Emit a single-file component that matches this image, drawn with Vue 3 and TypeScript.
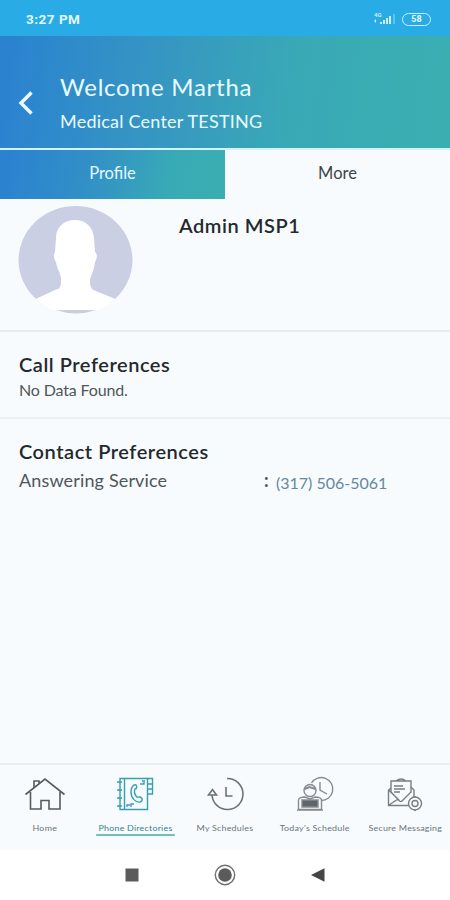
<script setup lang="ts">
interface NavItem {
  id: string
  label: string
  active?: boolean
}

const navItems: NavItem[] = [
  { id: 'home', label: 'Home' },
  { id: 'directory', label: 'Phone Directories', active: true },
  { id: 'schedules', label: 'My Schedules' },
  { id: 'today', label: "Today's Schedule" },
  { id: 'messaging', label: 'Secure Messaging' },
]
</script>

<template>
  <div class="screen">
    <div class="status">
      <span class="time">3:27 PM</span>
      <div class="indicators">
        <svg width="24" height="16" viewBox="0 0 24 16" fill="#c9f0fa">
          <text x="1" y="6" font-size="6" font-weight="700">4G</text>
          <path d="M1 10l2-2v4zM7 13v-2h2v2zM10 13v-4h2v4zM13 13V7h2v6zM16 13V5h2v8z" />
          <path d="M20 13V3h2v10z" opacity=".35" />
        </svg>
        <span class="battery">58</span>
      </div>
    </div>

    <header class="header">
      <svg class="back" width="16" height="26" viewBox="0 0 16 26" fill="none" stroke="#eefcff" stroke-width="3.4">
        <path d="M13.500 2.500L3 13l10.500 10.500" />
      </svg>
      <div class="heading">
        <h1>Welcome Martha</h1>
        <p>Medical Center TESTING</p>
      </div>
    </header>

    <div class="tabs">
      <div class="tab selected"><span>Profile</span></div>
      <div class="tab"><span>More</span></div>
    </div>

    <section class="person">
      <svg class="avatar" width="116" height="110" viewBox="0 0 116 110">
        <path d="M19 94A57 54 0 1 1 98 94L74 84L40 84Z" fill="#cbcfe3" />
        <path d="M58 15C47 15 39 22 39 33L38 47C36 49 37 55 39 57C40 64 44 69 44 74V78C43 86 38 86 33 88C25 91 21 93 19 94L34 105H82L98 94C96 93 88 90 83 88C77 86 73 84 73 78V74C75 69 77 65 78 57C80 54 81 49 78 47L77 33C76 22 69 15 58 15Z" fill="#fff" />
        <path d="M39 105H79Q59 112 39 105Z" fill="#cbcdd9" />
      </svg>
      <h2 class="name">Admin MSP1</h2>
    </section>

    <section class="calls">
      <h2>Call Preferences</h2>
      <p class="empty">No Data Found.</p>
    </section>

    <section class="contacts">
      <h2>Contact Preferences</h2>
      <div class="contact-row">
        <span class="service">Answering Service</span>
        <span class="colon">:</span>
        <span class="phone">(317) 506-5061</span>
      </div>
    </section>

    <nav class="nav">
      <div v-for="item in navItems" :key="item.id" class="nav-item" :class="{ active: item.active }">
        <svg v-if="item.id === 'home'" width="42" height="38" viewBox="0 0 42 38" fill="none" stroke="#555b60" stroke-width="1.600">
          <path d="M1.500 19.500L21 4L40.500 19.500M6.500 17V34H17V25.500H25V34H36V17M10 13V6h5v3.500" />
        </svg>
        <svg v-else-if="item.id === 'directory'" width="42" height="38" viewBox="0 0 42 38" fill="none" stroke="#36a0aa" stroke-width="1.400">
          <path d="M6 3.500H33.500V34.500H6ZM10.500 4V34" />
          <path d="M3 7h5M3 15h5M3 23h5M3 31h5M33.500 3.500h5v15.500h-5M34 9h4M34 14h4" />
          <path d="M22 10c-3-1-5 3-5 7c0 6 5 11 9 10c3-1 3-4 0-5c-2 0-3 1-4-1c-2-3-2-5-1-7c2 0 2-3 1-4Z" />
          <path d="M26 9h4v-2M28 6h3" />
          <path d="M13 32v-2h3M17 32v-3h3" stroke="#4a8fdc" />
        </svg>
        <svg v-else-if="item.id === 'schedules'" width="42" height="38" viewBox="0 0 42 38" fill="none" stroke="#697377" stroke-width="1.600">
          <path d="M23 3.500A15.500 15.500 0 1 1 8 20" />
          <path d="M4.500 20L8.500 14.500L12.500 20Z" />
          <path d="M22 12v9H28.500" />
        </svg>
        <svg v-else-if="item.id === 'today'" width="42" height="38" viewBox="0 0 42 38" fill="none" stroke="#858b90" stroke-width="1.400">
          <path d="M17.500 8A11.500 11.500 0 1 1 27 25.500" />
          <path d="M26 7v8l7 4" />
          <circle cx="16" cy="15.500" r="6" />
          <path d="M10.500 14l5-2l6 2" stroke-width="2" />
          <path d="M4.500 34.500V25Q5 22 11 22L16 24L21 22Q27 22 27.500 25V34.500Z" />
          <path d="M8 25h16v7H8z" fill="#5f666b" />
          <path d="M3 35h26" />
        </svg>
        <svg v-else width="42" height="38" viewBox="0 0 42 38" fill="none" stroke="#777f84" stroke-width="1.400">
          <path d="M7 13L4.500 15V30.500H25M7 17V6H27V17L18 26Q17 27 15.500 26ZM27 12l3 3v7M4.500 15L15 25M5 30l9-6M12 6q5-4 10 0" />
          <path d="M10 11h9M10 14h11M10 17h6" />
          <circle cx="31" cy="28.500" r="6.500" />
          <circle cx="31" cy="28.500" r="3" />
          <path d="M31 22v-1M31 36v-1M24 28.500h1M37 28.500h1" stroke-width="2" />
        </svg>
        <span class="nav-label">{{ item.label }}</span>
      </div>
    </nav>

    <div class="system">
      <svg width="14" height="14" viewBox="0 0 14 14"><path d="M.5.5h13v13H.5z" fill="#5b5b5b" /></svg>
      <svg width="22" height="22" viewBox="0 0 22 22">
        <circle cx="11" cy="11" r="9.700" fill="none" stroke="#707070" stroke-width="1.400" />
        <circle cx="11" cy="11" r="6.800" fill="#5b5b5b" />
      </svg>
      <svg width="14" height="14" viewBox="0 0 14 14"><path d="M0 7L13.500.3v13.400z" fill="#454545" /></svg>
    </div>
  </div>
</template>

<style>
body {
  margin: 0;
}
</style>

<style scoped>
.screen {
  width: 450px;
  height: 900px;
  display: flex;
  flex-direction: column;
  overflow: hidden;
  background: #f7fbfe;
  color: #25292c;
  font-family: Lato, sans-serif;
  white-space: nowrap;
}
h1,
h2,
p {
  margin: 0;
  font-weight: 400;
}
.status {
  height: 36px;
  box-sizing: border-box;
  padding: 2px 19px 0 26px;
  display: flex;
  align-items: center;
  justify-content: space-between;
  background: #29abe5;
  color: #e2f9ff;
  font-family: Roboto, sans-serif;
}
.time {
  font-size: 13.500px;
  font-weight: 700;
  letter-spacing: 0.500px;
}
.indicators {
  display: flex;
  align-items: center;
  gap: 5px;
}
.battery {
  width: 29px;
  height: 13px;
  box-sizing: border-box;
  border: 1.500px solid #c9f0fa;
  border-radius: 7px;
  font-size: 9px;
  line-height: 11px;
  font-weight: 700;
  text-align: center;
}
.header {
  height: 112px;
  box-sizing: border-box;
  padding-left: 18px;
  display: flex;
  background: linear-gradient(97deg, #2b83d0 3%, #3696c2 35%, #39a9b6 65%, #3aafb1);
  color: #e9fbff;
}
.back {
  margin: 54px 26px 0 0;
}
.heading {
  padding-top: 36px;
}
h1 {
  font-size: 24px;
  line-height: 30px;
  letter-spacing: 0.750px;
}
.heading p {
  margin-top: 7px;
  font-size: 18px;
  line-height: 24px;
  letter-spacing: 0.220px;
}
.tabs {
  height: 49px;
  border-top: 2px solid #d7f1f8;
  display: flex;
}
.tab {
  flex: 1;
  padding-top: 11px;
  text-align: center;
  font-size: 16.500px;
  line-height: 24px;
  color: #3d4448;
}
.selected {
  background: linear-gradient(100deg, #2b83d0 5%, #3290c7 40%, #38aab6 75%, #3aaeb1);
  color: #e4faff;
}
.person {
  height: 131px;
  display: flex;
  border-bottom: 2px solid #e7ecef;
}
.avatar {
  margin: 6px 0 0 17px;
}
.name {
  margin: 12px 0 0 46px;
}
h2 {
  font-size: 20px;
  line-height: 28px;
  font-weight: 600;
  letter-spacing: 0.540px;
}
.calls {
  height: 85px;
  border-bottom: 2px solid #ebf0f2;
  padding-left: 19px;
}
.calls h2 {
  margin-top: 18px;
}
.empty {
  font-size: 16px;
  line-height: 24px;
  letter-spacing: -0.150px;
  color: #4f565a;
}
.contacts {
  flex: 1;
  padding: 18px 0 0 19px;
}
.contact-row {
  display: flex;
  align-items: center;
  font-size: 18px;
  line-height: 24px;
  color: #4f565a;
}
.service {
  width: 245px;
  letter-spacing: 0.150px;
}
.colon {
  width: 12px;
  font-weight: 700;
}
.phone {
  font-size: 16px;
  padding-top: 6px;
  color: #64899c;
}
.nav {
  height: 85px;
  border-top: 2px solid #e9edf1;
  display: flex;
}
.nav-item {
  width: 90px;
  padding-top: 10px;
  display: flex;
  flex-direction: column;
  align-items: center;
  color: #6c757b;
}
.nav-label {
  margin-top: 9px;
  font-size: 7.800px;
  line-height: 12px;
  letter-spacing: 0.200px;
  transform: scaleX(1.14);
}
.active .nav-label {
  padding: 0 2px;
  border-bottom: 2px solid #70bebd;
  color: #35858b;
}
.system {
  height: 50px;
  background: #fff;
  display: flex;
  align-items: center;
  justify-content: center;
  gap: 75px;
}
</style>
